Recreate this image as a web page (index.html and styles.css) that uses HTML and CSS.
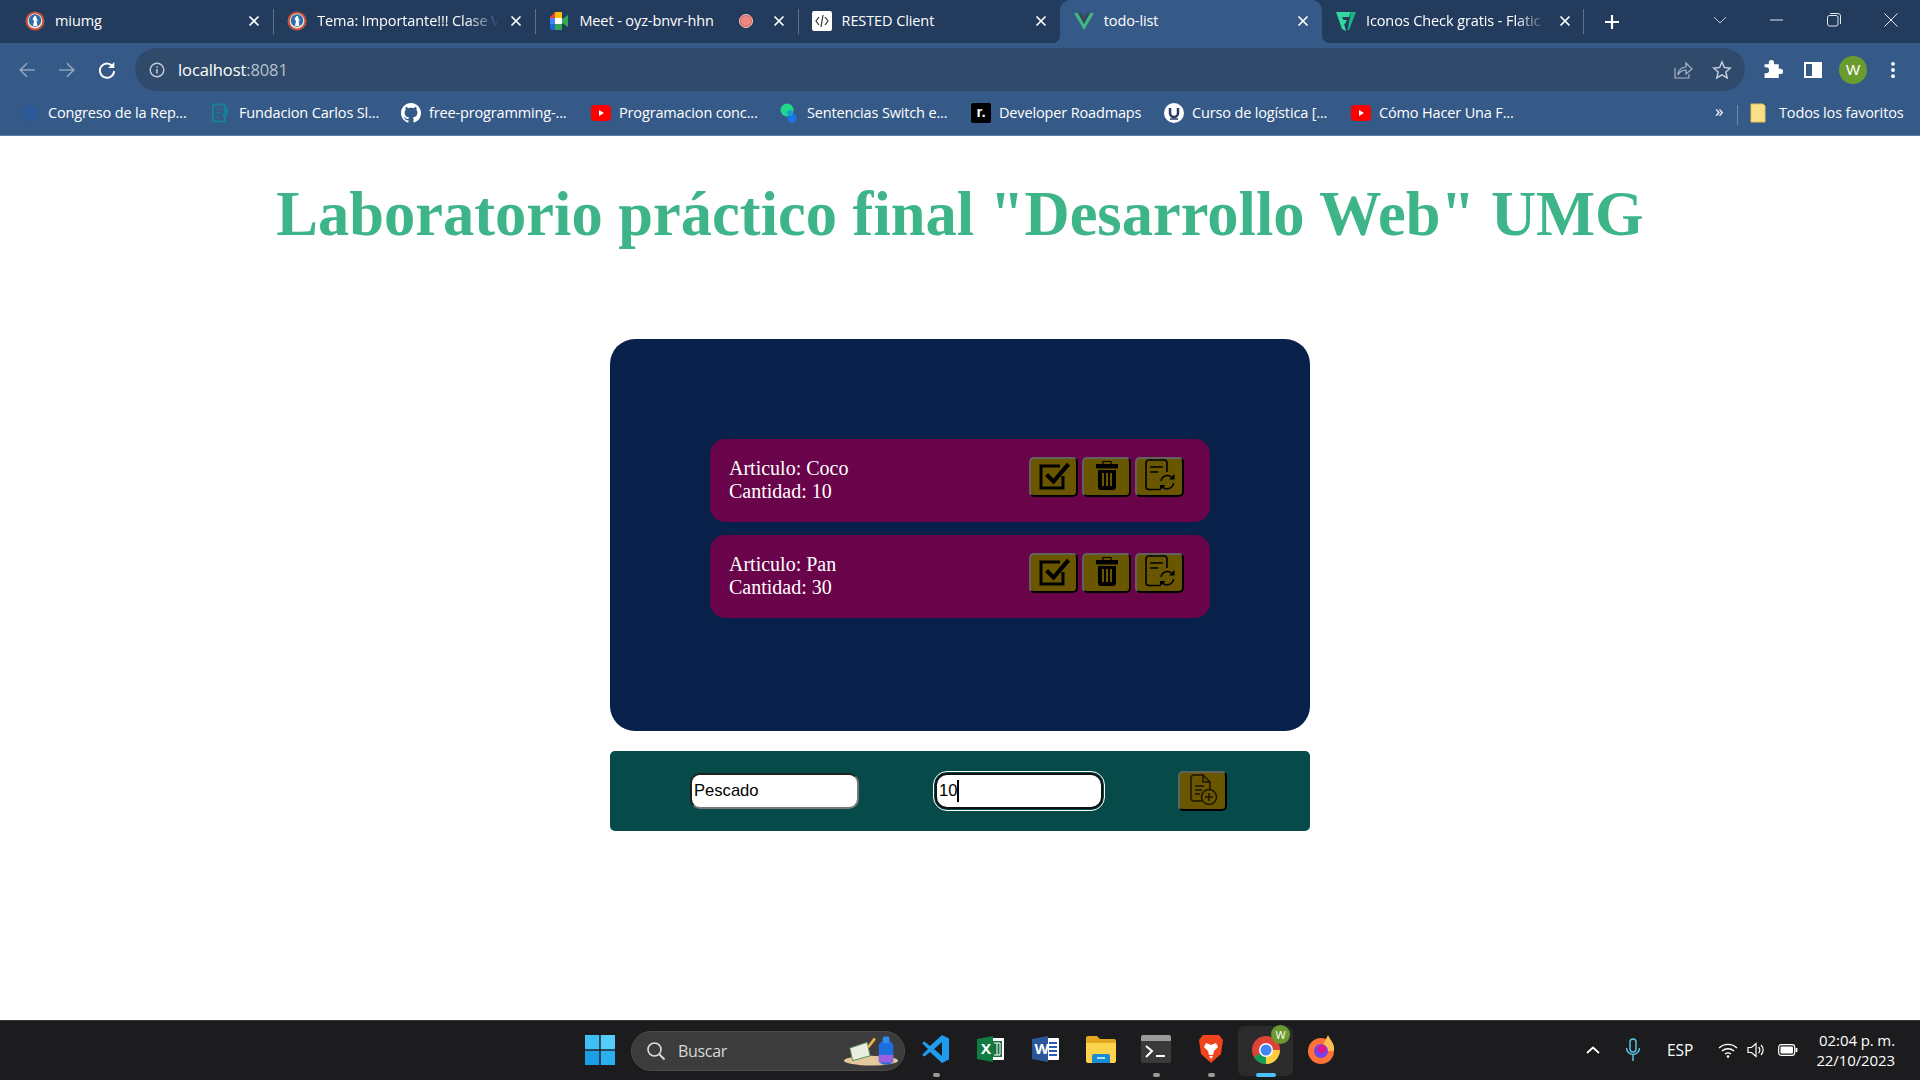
FILE: index.html
```html
<!DOCTYPE html>
<html lang="es">
<head>
<meta charset="utf-8">
<title>todo-list</title>
<link rel="stylesheet" href="styles.css">
</head>
<body>

<svg class="defs" width="0" height="0">
  <symbol id="x" viewBox="0 0 14 14"><path d="M2.500 2.500l9 9M11.500 2.500l-9 9" stroke="#fff" stroke-width="1.700" fill="none"/></symbol>
  <symbol id="crest" viewBox="0 0 20 20"><circle cx="10" cy="10" r="9.500" fill="#c8523f"/><circle cx="10" cy="10" r="7.400" fill="#e9e3dc"/><circle cx="10" cy="9.500" r="6.200" fill="#2f6da6"/><path d="M8 15l1-5-1.500-2 2-3h1.500l.7 3 1.500 2-1.700-.6.8 5.600z" fill="#fff"/></symbol>
  <symbol id="yt" viewBox="0 0 20 20"><rect y="2" width="20" height="16" rx="4" fill="#f00"/><path d="M8 7l5 3-5 3z" fill="#fff"/></symbol>
  <symbol id="check" viewBox="0 0 32 32"><path d="M25 17v12H3V7h19" fill="none" stroke="#000" stroke-width="3"/><path d="M8.500 15.500l7 7L30.500 5" fill="none" stroke="#000" stroke-width="4.200"/></symbol>
  <symbol id="trash" viewBox="0 0 32 32"><path d="M12 5V2.500h8V5" fill="none" stroke="#000" stroke-width="1.200"/><path d="M5 5h22v4.500H5z"/><path fill-rule="evenodd" d="M7 11h18v17a3 3 0 0 1-3 3H10a3 3 0 0 1-3-3zM11 14v13h2V14zM15 14v13h2V14zM19 14v13h2V14z"/></symbol>
  <symbol id="refresh" viewBox="0 0 32 32"><path d="M16 30.500H5a3 3 0 0 1-3-3V4a3 3 0 0 1 3-3h15a3 3 0 0 1 3 3v9" fill="none" stroke="#000" stroke-width="1.600"/><path d="M6 8h13M6 13h8" stroke="#000" stroke-width="1.600"/><path d="M17 22a6.500 6.500 0 0 1 11.500-3M29.500 24a6.500 6.500 0 0 1-11.500 3.500" fill="none" stroke="#000" stroke-width="1.600"/><path d="M30.500 15v5.500H25zM16 31.500V26h5.500z"/></symbol>
  <symbol id="add" viewBox="0 0 32 32"><path d="M15 27H7a3 3 0 0 1-3-3V4a3 3 0 0 1 3-3h9l7 7v7" fill="none" stroke="#1c1500" stroke-width="1.500"/><path d="M16 1v7h7M8 12h9M8 16h7M8 20h5" fill="none" stroke="#1c1500" stroke-width="1.500"/><circle cx="22" cy="23" r="7.500" fill="none" stroke="#1c1500" stroke-width="1.500"/><path d="M22 19v8M18 23h8" stroke="#1c1500" stroke-width="1.500"/></symbol>
</svg>

<div class="tabstrip">
  <div class="tab sep">
    <svg class="fav"><use href="#crest"/></svg>
    <span class="tab-title">miumg</span>
    <svg class="close"><use href="#x"/></svg>
  </div>
  <div class="tab sep">
    <svg class="fav"><use href="#crest"/></svg>
    <span class="tab-title fade">Tema: Importante!!! Clase V</span>
    <svg class="close"><use href="#x"/></svg>
  </div>
  <div class="tab sep">
    <svg class="fav" viewBox="0 0 20 20"><path d="M1 6l5-5v6H1z" fill="#ea4335"/><path d="M6 1h7v6H6z" fill="#fbbc04"/><path d="M1 7h5v6H1z" fill="#4285f4"/><path d="M1 13h5v6H3a2 2 0 0 1-2-2z" fill="#1967d2"/><path d="M6 13h7v6H6z" fill="#34a853"/><path d="M13 8l6-4v12l-6-4z" fill="#34a853"/><path d="M6 7h7v6H6z" fill="#fff"/></svg>
    <span class="tab-title">Meet - oyz-bnvr-hhn</span>
    <span class="rec"></span>
    <svg class="close"><use href="#x"/></svg>
  </div>
  <div class="tab">
    <svg class="fav" viewBox="0 0 20 20"><rect width="20" height="20" rx="2" fill="#fff"/><path d="M7 6l-3 4 3 4M13 6l3 4-3 4M11 4L9 16" fill="none" stroke="#333" stroke-width="1.200"/></svg>
    <span class="tab-title">RESTED Client</span>
    <svg class="close"><use href="#x"/></svg>
  </div>
  <div class="tab active">
    <svg class="fav" viewBox="0 0 20 20"><path d="M0 2h4l6 11 6-11h4L10 19z" fill="#41b883"/><path d="M4 2h3.500L10 6.500 12.500 2H16l-6 11z" fill="#35495e"/></svg>
    <span class="tab-title">todo-list</span>
    <svg class="close"><use href="#x"/></svg>
  </div>
  <div class="tab">
    <svg class="fav" viewBox="0 0 20 20"><path d="M0 1h15l-2 5H6l1.500 3H11l-2 4-1-.5L10 20 6 18z" fill="#33d69f"/><path d="M15 1h5L13 19h-1.500z" fill="#1bb585"/></svg>
    <span class="tab-title fade">Iconos Check gratis - Flatic</span>
    <svg class="close"><use href="#x"/></svg>
  </div>
  <div class="strip-end">
    <svg class="plus" viewBox="0 0 16 16"><path d="M8 1v14M1 8h14" stroke="#fff" stroke-width="2.200"/></svg>
    <svg class="chevron" viewBox="0 0 14 8"><path d="M1 1l6 6 6-6" fill="none" stroke="#c7d0dc" stroke-width="1"/></svg>
    <div class="win-btns">
      <svg viewBox="0 0 14 14"><path d="M0 7h13" stroke="#e4e8ee" stroke-width="1"/></svg>
      <svg viewBox="0 0 14 14"><rect x=".5" y="2.500" width="10.500" height="10.500" rx="2" fill="none" stroke="#e4e8ee"/><path d="M3 .5h8a2.500 2.500 0 0 1 2.500 2.500v8" fill="none" stroke="#e4e8ee"/></svg>
      <svg viewBox="0 0 14 14"><path d="M.5.5l13 13M13.500.5l-13 13" stroke="#e4e8ee" stroke-width="1"/></svg>
    </div>
  </div>
</div>

<div class="toolbar">
  <button class="tool dim"><svg viewBox="0 0 16 16"><path d="M15 8H2M8 2L2 8l6 6" fill="none" stroke="#8fa3bc" stroke-width="1.500"/></svg></button>
  <button class="tool dim"><svg viewBox="0 0 16 16"><path d="M1 8h13M8 2l6 6-6 6" fill="none" stroke="#8fa3bc" stroke-width="1.500"/></svg></button>
  <button class="tool"><svg viewBox="0 0 16 16"><path d="M13.500 5.500A6.300 6.300 0 1 0 14.300 9" fill="none" stroke="#fff" stroke-width="1.700"/><path d="M14.500.8v5.500H9z" fill="#fff"/></svg></button>
  <div class="omnibox">
    <svg class="info" viewBox="0 0 16 16"><circle cx="8" cy="8" r="6.800" fill="none" stroke="#c3ccd8" stroke-width="1.400"/><path d="M8 7v4.500M8 4.200v1.600" stroke="#c3ccd8" stroke-width="1.500"/></svg>
    <span class="url">localhost<span class="port">:8081</span></span>
    <svg class="omni-icon" viewBox="0 0 20 20"><path d="M2 8v10h14v-4" fill="none" stroke="#a9b5c4" stroke-width="1.200"/><path d="M5 15c0-5 4-8 8-8V3l6 6-6 5v-4c-3 0-6 1-8 5z" fill="none" stroke="#a9b5c4" stroke-width="1.200"/></svg>
    <svg class="omni-icon star" viewBox="0 0 20 20"><path d="M10 2l2.400 5.500 6 .5-4.600 4 1.400 5.900L10 14.800l-5.200 3.100L6.200 12 1.600 8l6-.5z" fill="none" stroke="#c3ccd8" stroke-width="1.500"/></svg>
  </div>
  <button class="tool first"><svg class="puzzle" viewBox="0 0 20 20"><path d="M8 1a2.500 2.500 0 0 1 2.500 2.500V5H15v4.200h1.500a2.600 2.600 0 0 1 0 5.200H15V18H1.500v-4.500H3a2.800 2.800 0 0 0 0-5.600H1.500V5h4V3.500A2.500 2.500 0 0 1 8 1z" fill="#fff"/></svg></button>
  <button class="tool"><svg viewBox="0 0 18 18"><path fill-rule="evenodd" d="M0 1h18v16H0zM2 3v12h6V3z" fill="#fff"/></svg></button>
  <button class="tool"><span class="avatar">W</span></button>
  <button class="tool"><svg viewBox="0 0 16 16"><circle cx="8" cy="2.500" r="1.700" fill="#fff"/><circle cx="8" cy="8" r="1.700" fill="#fff"/><circle cx="8" cy="13.500" r="1.700" fill="#fff"/></svg></button>
</div>

<div class="bookmarks">
  <a class="bm"><svg viewBox="0 0 20 20"><path d="M10 1l2 3 4-2-1 4 4 1-3 3 3 4-5 0-1 4-3-2-3 2-1-4-5 0 3-4-3-3 4-1-1-4 4 2z" fill="#2a5a9a"/></svg>Congreso de la Rep...</a>
  <a class="bm"><svg viewBox="0 0 20 20"><path d="M2 1.500h12v17H2z" fill="none" stroke="#1a7f94" stroke-width="2"/><path d="M5 6h6M5 10h6M5 14h4" stroke="#1a7f94"/><path d="M11 13l7-11-2 11-3 2z" fill="#1a7f94"/></svg>Fundacion Carlos Sl...</a>
  <a class="bm"><svg viewBox="0 0 16 16"><path fill="#fff" d="M8 0C3.580 0 0 3.580 0 8c0 3.540 2.290 6.530 5.470 7.590.4.070.55-.17.55-.38 0-.19-.01-.82-.01-1.490-2.010.37-2.530-.49-2.690-.94-.09-.23-.48-.94-.82-1.130-.28-.15-.68-.52-.01-.53.63-.01 1.080.58 1.230.82.72 1.210 1.870.87 2.330.66.070-.52.28-.87.51-1.070-1.780-.2-3.640-.89-3.640-3.950 0-.87.31-1.590.82-2.150-.08-.2-.36-1.020.08-2.120 0 0 .67-.21 2.200.82.64-.18 1.320-.27 2-.27s1.360.09 2 .27c1.530-1.040 2.200-.82 2.200-.82.44 1.100.16 1.920.08 2.120.51.56.82 1.270.82 2.150 0 3.070-1.870 3.750-3.650 3.950.29.25.54.73.54 1.480 0 1.070-.01 1.930-.01 2.200 0 .21.15.46.55.38A8.013 8.013 0 0 0 16 8c0-4.420-3.580-8-8-8z"/></svg>free-programming-...</a>
  <a class="bm"><svg><use href="#yt"/></svg>Programacion conc...</a>
  <a class="bm"><svg viewBox="0 0 20 20"><circle cx="8" cy="7" r="6.500" fill="#1fd98b"/><circle cx="13" cy="15" r="4.500" fill="#1a73e8"/><circle cx="11" cy="10" r="3" fill="#1a9fd0"/></svg>Sentencias Switch e...</a>
  <a class="bm"><span class="rm-logo">r.</span>Developer Roadmaps</a>
  <a class="bm"><svg viewBox="0 0 20 20"><circle cx="10" cy="10" r="10" fill="#fff"/><path d="M6 5v5a4 4 0 0 0 8 0V5" fill="none" stroke="#2d3b63" stroke-width="2.500"/><path d="M6 16h8" stroke="#2d3b63" stroke-width="1.500"/></svg>Curso de logística [...</a>
  <a class="bm"><svg><use href="#yt"/></svg>Cómo Hacer Una F...</a>
  <div class="bm-end">
    <span class="more">»</span>
    <svg class="folder" viewBox="0 0 16 20"><path d="M1 1h12l2 2v16H1z" fill="#fbe08a" stroke="#e8c24f"/></svg>
    <span>Todos los favoritos</span>
  </div>
</div>

<main class="page">
  <h1>Laboratorio práctico final "Desarrollo Web" UMG</h1>
  <section class="panel">
    <div class="item">
      <div class="item-text">Articulo: Coco<br>Cantidad: 10</div>
      <div class="actions">
        <button class="act"><svg><use href="#check"/></svg></button>
        <button class="act"><svg><use href="#trash"/></svg></button>
        <button class="act"><svg><use href="#refresh"/></svg></button>
      </div>
    </div>
    <div class="item">
      <div class="item-text">Articulo: Pan<br>Cantidad: 30</div>
      <div class="actions">
        <button class="act"><svg><use href="#check"/></svg></button>
        <button class="act"><svg><use href="#trash"/></svg></button>
        <button class="act"><svg><use href="#refresh"/></svg></button>
      </div>
    </div>
  </section>
  <form class="add-form">
    <input class="field" type="text" value="Pescado">
    <div class="field focused"><span>10</span><i class="caret"></i></div>
    <button class="act" type="button"><svg><use href="#add"/></svg></button>
  </form>
</main>

<footer class="taskbar">
  <svg class="start" viewBox="0 0 30 30"><rect width="14.300" height="14.300" x="0" y="0" fill="#3fc0f5"/><rect width="14.300" height="14.300" x="15.700" y="0" fill="#55cdf8"/><rect width="14.300" height="14.300" x="0" y="15.700" fill="#1b9ee6"/><rect width="14.300" height="14.300" x="15.700" y="15.700" fill="#2bafee"/></svg>
  <div class="search">
    <svg viewBox="0 0 20 20"><circle cx="8.500" cy="8.500" r="6.500" fill="none" stroke="#ddd" stroke-width="1.600"/><path d="M13 13l5.500 5.500" stroke="#ddd" stroke-width="1.800"/></svg>
    <span>Buscar</span>
    <svg class="search-art" viewBox="0 0 60 30"><ellipse cx="28" cy="25" rx="28" ry="5" fill="#e2c89a"/><path d="M6 12l18-6 3 14-18 5z" fill="#e8efe0" stroke="#5b8a5b"/><path d="M24 10l7-9 2 2-7 9z" fill="#f3b24a"/><rect x="36" y="5" width="15" height="24" rx="5" fill="#1d6fe0"/><rect x="40" y="0" width="7" height="7" rx="2" fill="#2d8cf0"/><rect x="36" y="19" width="15" height="8" fill="#9a60e0"/></svg>
  </div>
  <div class="task"><svg viewBox="0 0 30 30"><path d="M21 1l7 3.500v21L21 29 9 18l-5.500 4.500L1 21l6-6-6-6 2.500-1.500L9 12z" fill="#1f9cf0"/><path d="M21 8v14l-8-7z" fill="#1c1c1c"/></svg><i class="dot"></i></div>
  <div class="task"><svg viewBox="0 0 30 30"><path d="M12 4h15a1 1 0 0 1 1 1v20a1 1 0 0 1-1 1H12z" fill="#fff"/><path d="M16 7h10v16H16z" fill="#1d7044"/><path d="M18 9h6v12h-6M21 9v12" fill="none" stroke="#fff"/><path d="M1 5l16-3v26L1 25z" fill="#107c41"/><text x="5" y="20" class="ms-letter">X</text></svg></div>
  <div class="task"><svg viewBox="0 0 30 30"><path d="M12 4h15a1 1 0 0 1 1 1v20a1 1 0 0 1-1 1H12z" fill="#fff"/><path d="M18 9h8M18 13h8M18 17h8M18 21h8" stroke="#2b5eb0" stroke-width="2"/><path d="M1 5l16-3v26L1 25z" fill="#2b579a"/><text x="3.500" y="20" class="ms-letter">W</text></svg></div>
  <div class="task"><svg viewBox="0 0 30 30"><path d="M0 4a2 2 0 0 1 2-2h9l3 3h14a2 2 0 0 1 2 2v3H0z" fill="#e3a81f"/><path d="M0 9h30v18a2 2 0 0 1-2 2H2a2 2 0 0 1-2-2z" fill="#fbd44c"/><path d="M8 20h14a2 2 0 0 1 2 2v7H6v-7a2 2 0 0 1 2-2z" fill="#1a8ad4"/><path d="M11 24h8" stroke="#dff" stroke-width="1.500"/></svg></div>
  <div class="task"><svg viewBox="0 0 30 30"><rect y="1" width="30" height="28" rx="2" fill="#3a3a3a"/><path d="M0 3a2 2 0 0 1 2-2h26a2 2 0 0 1 2 2v4H0z" fill="#9a9a9a"/><path d="M5 12l6 5-6 6" fill="none" stroke="#fff" stroke-width="2"/><path d="M15 22h9" stroke="#fff" stroke-width="2"/></svg><i class="dot"></i></div>
  <div class="task"><svg viewBox="0 0 30 30"><path d="M7 1h16l4 5-2 14-10 9L5 20 3 6z" fill="#f1441d"/><path d="M10 9l5 2 5-2 2 4-4 4-1 4h-4l-1-4-4-4z" fill="#fff"/><path d="M13 22h4l-2 3z" fill="#fff"/></svg><i class="dot"></i></div>
  <div class="task current"><svg viewBox="0 0 30 30"><circle cx="15" cy="16" r="14" fill="#db4437"/><path d="M15 16L27 23a14 14 0 0 1-12 7 14 14 0 0 1-12-7z" fill="#0f9d58"/><path d="M15 16h14a14 14 0 0 1-2 7 14 14 0 0 1-12 7z" fill="#ffcd40"/><circle cx="15" cy="16" r="7" fill="#fff"/><circle cx="15" cy="16" r="5.500" fill="#4285f4"/></svg><span class="badge">W</span><i class="dot on"></i></div>
  <div class="task"><svg viewBox="0 0 30 30"><circle cx="15" cy="17" r="13" fill="#ff7139"/><path d="M22 1c2 5 7 8 6 16H14z" fill="#ffbd4f"/><circle cx="15" cy="17" r="7" fill="#7542e5"/><circle cx="16" cy="15" r="4" fill="#e31587"/></svg></div>
  <div class="tray">
    <svg class="t-chev" viewBox="0 0 14 8"><path d="M1 7l6-5.500L13 7" fill="none" stroke="#fff" stroke-width="1.800"/></svg>
    <svg class="t-mic" viewBox="0 0 16 24"><rect x="5" y="1" width="6" height="13" rx="3" fill="none" stroke="#5cc8e8" stroke-width="1.400"/><path d="M1.500 10a6.500 6.500 0 0 0 13 0M8 17v6" fill="none" stroke="#5cc8e8" stroke-width="1.400"/></svg>
    <span class="t-lang">ESP</span>
    <svg class="t-wifi" viewBox="0 0 20 16"><path d="M1 6a13 13 0 0 1 18 0M4 9a9 9 0 0 1 12 0M7 12a5 5 0 0 1 6 0" fill="none" stroke="#fff" stroke-width="1.400"/><circle cx="10" cy="14.500" r="1.300" fill="#fff"/></svg>
    <svg class="t-vol" viewBox="0 0 20 16"><path d="M1 5.500h3.500L9 1.500v13l-4.500-4H1z" fill="none" stroke="#fff" stroke-width="1.200"/><path d="M11.500 5a4 4 0 0 1 0 6M14 3a7 7 0 0 1 0 10" fill="none" stroke="#fff" stroke-width="1.200"/></svg>
    <svg class="t-bat" viewBox="0 0 20 12"><rect x=".7" y=".7" width="16" height="10.600" rx="2.500" fill="none" stroke="#fff" stroke-width="1.200"/><rect x="2.500" y="2.500" width="12.500" height="7" rx="1" fill="#fff"/><path d="M18.500 4v4" stroke="#fff" stroke-width="1.800"/></svg>
    <div class="clock">02:04 p. m.<br>22/10/2023</div>
  </div>
</footer>

</body>
</html>
```

FILE: styles.css
```css
*{box-sizing:border-box;margin:0;padding:0;}
html,body{height:100%;}
body{width:1920px;height:1080px;overflow:hidden;display:flex;flex-direction:column;background:#fff;font-family:"Open Sans","Noto Sans",sans-serif;}
.defs{position:absolute;}
svg{display:block;flex:none;}

/* tabs */
.tabstrip{height:43px;flex:none;background:#233b5d;padding-left:11px;display:flex;color:#fff;font-size:14.500px;letter-spacing:-.1px;}
.tab{position:relative;width:262.200px;height:43px;padding:0 12px 1px 14px;display:flex;align-items:center;gap:10px;}
.tab.sep::after{content:"";position:absolute;right:-1px;top:9px;height:25px;width:1px;background:#5d7491;}
.tab.active{background:#355a88;border-radius:10px 10px 0 0;}
.tab.active::before,.tab.active::after{content:"";position:absolute;bottom:0;width:8px;height:8px;}
.tab.active::before{left:-8px;background:radial-gradient(circle at 0 0,transparent 8px,#355a88 8.500px);}
.tab.active::after{right:-8px;background:radial-gradient(circle at 100% 0,transparent 8px,#355a88 8.500px);}
.fav{width:20px;height:20px;}
.tab-title{flex:1;white-space:nowrap;overflow:hidden;padding-bottom:1px;}
.tab-title.fade{-webkit-mask-image:linear-gradient(90deg,#000 82%,transparent 100%);mask-image:linear-gradient(90deg,#000 82%,transparent 100%);}
.close{width:14px;height:14px;}
.rec{width:14px;height:14px;margin-right:9px;border-radius:50%;background:#ef8a80;border:1px solid #f7c4be;box-shadow:0 0 0 1px #c9655c inset;}
.strip-end{flex:1;position:relative;display:flex;align-items:center;color:#fff;}
.plus{width:16px;height:16px;margin-left:20px;}
.strip-end::before{content:"";position:absolute;left:-1px;top:9px;height:25px;width:1px;background:#5d7491;}
.chevron{width:14px;height:8px;margin:-4px 0 0 93px;}
.win-btns{display:flex;margin-left:auto;gap:43px;padding:0 22px 4px 0;}
.win-btns svg{width:14px;height:14px;}

/* toolbar */
.toolbar{height:49px;flex:none;background:#355a88;display:flex;align-items:flex-start;padding:5px 7px 0;}
.tool{width:40px;height:43px;border:0;background:none;display:flex;align-items:center;justify-content:center;}
.tool svg{width:18px;height:18px;}
.tool .puzzle{width:21px;height:21px;}
.tool.first{margin-left:8px;}
.omnibox{flex:1;height:43px;margin-left:8px;background:#2f4a6b;border-radius:22px;display:flex;align-items:center;padding:0 13px 0 14px;color:#fff;font-size:16.500px;letter-spacing:-.1px;}
.info{width:16px;height:16px;margin-right:13px;}
.url{flex:1;padding-bottom:1px;}
.port{color:#b7c2d0;}
.omni-icon{width:20px;height:20px;}
.omni-icon.star{margin-left:19px;}
.avatar{width:28px;height:28px;border-radius:50%;background:#6a9b2e;color:#fff;font-size:15px;line-height:28px;text-align:center;}

/* bookmarks */
.bookmarks{height:44px;flex:none;background:#355a88;border-bottom:1px solid #5f7fa6;padding:0 0 2px 20px;display:grid;grid-template-columns:191px 190px 190px 188px 192px 193px 187px 1fr 212px;align-items:center;color:#fff;font-size:14.500px;letter-spacing:-.15px;white-space:nowrap;}
.bm{display:flex;align-items:center;gap:8px;}
.bm svg{width:20px;height:20px;}
.rm-logo{width:20px;height:20px;background:#000;color:#fff;border-radius:2px;font:bold 15px/18px "Liberation Sans",sans-serif;text-align:center;letter-spacing:0;}
.bm-end{grid-column:9;display:flex;align-items:center;position:relative;padding-left:7px;}
.more{width:30px;font-size:17px;line-height:18px;margin-top:-3px;}
.bm-end::before{content:"";position:absolute;left:29px;top:2px;height:20px;width:1px;background:#6c89ad;}
.folder{width:16px;height:20px;margin:0 13px 0 5px;}

/* page */
.page{flex:1;display:flex;flex-direction:column;align-items:center;font-family:"Liberation Serif",serif;}
h1{margin-top:41px;font-size:62.500px;line-height:74px;font-weight:bold;color:#3eb489;white-space:nowrap;}
.panel{margin-top:88px;width:700px;height:392px;padding-top:100px;background:#07214a;border-radius:25px;display:flex;flex-direction:column;align-items:center;gap:13px;}
.item{width:500px;height:83px;padding:0 26px 0 19px;background:#69044a;border-radius:15px;display:flex;align-items:center;justify-content:space-between;color:#fff;font-size:20px;line-height:23px;}
.item-text{padding-bottom:2px;}
.actions{display:flex;gap:4px;margin-bottom:8px;}
.act{width:49px;height:40px;padding-bottom:3px;background:#6b5600;border:2px solid;border-color:#62625c #000 #000 #62625c;border-radius:5px;display:flex;align-items:center;justify-content:center;}
.act svg{width:32px;height:32px;}
.add-form{margin-top:20px;width:700px;height:80px;padding-left:80px;background:#074a4a;border-radius:5px;display:flex;align-items:center;gap:76px;}
.field{width:169px;height:36px;padding:0 2px;background:#fff;border:2px solid;border-color:#222 #777 #777 #222;border-radius:10px;font:16.600px "Liberation Sans",Arial,sans-serif;color:#000;}
.field.focused{width:168px;margin-right:-1px;display:flex;align-items:center;border-color:#111;outline:1px solid #fff;outline-offset:1px;border-radius:12px;}
.caret{width:2px;height:22px;background:#000;}

/* taskbar */
.taskbar{height:60px;flex:none;background:#1c1c1e;border-top:1px solid #363636;display:flex;align-items:center;padding-left:585px;color:#fff;}
.start{width:30px;height:30px;margin:0 16px 2px 0;}
.search{width:274px;height:40px;border-radius:20px;background:#3c3c3c;border:1px solid #4a4a4a;display:flex;align-items:center;padding-left:14px;margin-right:3px;color:#d8d8d8;font-size:16px;font-family:"Open Sans",sans-serif;letter-spacing:-.3px;}
.search svg{width:20px;height:20px;margin-right:12px;}
.search .search-art{width:58px;height:30px;margin:0 2px 0 auto;}
.task{position:relative;width:55px;height:50px;display:flex;align-items:center;justify-content:center;border-radius:6px;}
.task svg{width:30px;height:30px;margin-bottom:4px;}
.task.current{background:#2b2b2b;}
.dot{position:absolute;bottom:-1px;left:50%;width:7px;height:4px;margin-left:-3px;border-radius:2px;background:#9a9a9a;}
.dot.on{width:20px;margin-left:-10px;background:#4cc2ff;}
.badge{position:absolute;top:-1px;right:3px;width:19px;height:19px;border-radius:50%;background:#6a9b2e;font:11px/19px "Open Sans",sans-serif;text-align:center;}
.ms-letter{font:bold 15px "Open Sans",sans-serif;fill:#fff;}
.tray{margin-left:auto;padding:0 25px 2px 0;display:flex;align-items:center;}
.t-chev{width:14px;height:8px;margin-right:25px;}
.t-mic{width:16px;height:24px;margin-right:26px;}
.t-lang{width:51px;font-size:15.500px;}
.t-wifi{width:20px;height:16px;margin-right:9px;}
.t-vol{width:20px;height:16px;margin-right:11px;}
.t-bat{width:20px;height:12px;margin-right:11px;}
.clock{width:86px;text-align:right;font-size:15px;line-height:20px;letter-spacing:-.1px;white-space:nowrap;}
```
